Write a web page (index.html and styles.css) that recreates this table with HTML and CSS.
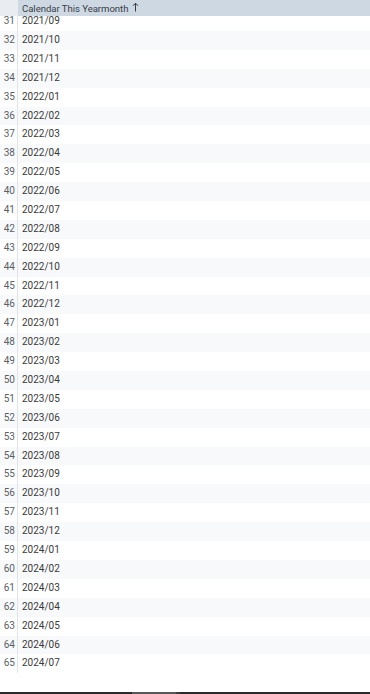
FILE: index.html
```html
<!DOCTYPE html>
<html>
<head>
<meta charset="utf-8">
<link rel="stylesheet" href="styles.css">
</head>
<body>
<div class="table">
  <div class="head">
    <div class="idx-head"></div>
    <div class="col-head">Calendar This Yearmonth <svg class="arrow" width="7" height="10" viewBox="0 0 7 10"><path d="M3.5 1.2V9.5M1 3.8L3.5 1.2L6 3.8" fill="none" stroke="#333a42" stroke-width="1"/></svg></div>
  </div>
  <div class="rows" id="rows">
    <div class="row"><div class="idx">31</div><div class="cell">2021/09</div></div>
    <div class="row"><div class="idx">32</div><div class="cell">2021/10</div></div>
    <div class="row"><div class="idx">33</div><div class="cell">2021/11</div></div>
    <div class="row"><div class="idx">34</div><div class="cell">2021/12</div></div>
    <div class="row"><div class="idx">35</div><div class="cell">2022/01</div></div>
    <div class="row"><div class="idx">36</div><div class="cell">2022/02</div></div>
    <div class="row"><div class="idx">37</div><div class="cell">2022/03</div></div>
    <div class="row"><div class="idx">38</div><div class="cell">2022/04</div></div>
    <div class="row"><div class="idx">39</div><div class="cell">2022/05</div></div>
    <div class="row"><div class="idx">40</div><div class="cell">2022/06</div></div>
    <div class="row"><div class="idx">41</div><div class="cell">2022/07</div></div>
    <div class="row"><div class="idx">42</div><div class="cell">2022/08</div></div>
    <div class="row"><div class="idx">43</div><div class="cell">2022/09</div></div>
    <div class="row"><div class="idx">44</div><div class="cell">2022/10</div></div>
    <div class="row"><div class="idx">45</div><div class="cell">2022/11</div></div>
    <div class="row"><div class="idx">46</div><div class="cell">2022/12</div></div>
    <div class="row"><div class="idx">47</div><div class="cell">2023/01</div></div>
    <div class="row"><div class="idx">48</div><div class="cell">2023/02</div></div>
    <div class="row"><div class="idx">49</div><div class="cell">2023/03</div></div>
    <div class="row"><div class="idx">50</div><div class="cell">2023/04</div></div>
    <div class="row"><div class="idx">51</div><div class="cell">2023/05</div></div>
    <div class="row"><div class="idx">52</div><div class="cell">2023/06</div></div>
    <div class="row"><div class="idx">53</div><div class="cell">2023/07</div></div>
    <div class="row"><div class="idx">54</div><div class="cell">2023/08</div></div>
    <div class="row"><div class="idx">55</div><div class="cell">2023/09</div></div>
    <div class="row"><div class="idx">56</div><div class="cell">2023/10</div></div>
    <div class="row"><div class="idx">57</div><div class="cell">2023/11</div></div>
    <div class="row"><div class="idx">58</div><div class="cell">2023/12</div></div>
    <div class="row"><div class="idx">59</div><div class="cell">2024/01</div></div>
    <div class="row"><div class="idx">60</div><div class="cell">2024/02</div></div>
    <div class="row"><div class="idx">61</div><div class="cell">2024/03</div></div>
    <div class="row"><div class="idx">62</div><div class="cell">2024/04</div></div>
    <div class="row"><div class="idx">63</div><div class="cell">2024/05</div></div>
    <div class="row"><div class="idx">64</div><div class="cell">2024/06</div></div>
    <div class="row"><div class="idx">65</div><div class="cell">2024/07</div></div>
  </div>
  <div class="filler"></div>
  <div class="scrollbar"><div class="sb-left"></div><div class="sb-thumb"></div><div class="sb-mid"></div><div class="sb-right"></div></div>
</div>
</body>
</html>
```
FILE: styles.css
```css
html, body {
  margin: 0;
  padding: 0;
  background: #ffffff;
}
body {
  width: 370px;
  height: 694px;
  overflow: hidden;
  font-family: Roboto, "Liberation Sans", sans-serif;
  font-size: 10px;
}
.table {
  display: flex;
  flex-direction: column;
  height: 694px;
}
.head {
  display: flex;
  height: 16px;
  flex: none;
  position: relative;
  z-index: 1;
}
.idx-head {
  width: 18px;
  background: #e9edf1;
}
.col-head {
  flex: 1;
  background: #cdd8e3;
  color: #3a4048;
  padding-left: 4px;
  display: flex;
  align-items: center;
  gap: 4px;
  white-space: nowrap;
  font-size: 9.6px;
  letter-spacing: -0.05px;
}
.arrow {
  display: block;
  margin-top: -2px;
}
.rows {
  margin-top: -3.9px;
  flex: none;
}
.row {
  display: flex;
  height: 18.9px;
  line-height: 18.9px;
}
.row:nth-child(even) {
  background: #f8f9fb;
}
.idx {
  width: 18px;
  border-right: 1px solid #e1e4e8;
  text-align: right;
  padding-right: 2px;
  box-sizing: border-box;
  color: #5a5f66;
}
.cell {
  padding-left: 4px;
  color: #3a3a3a;
}
.filler {
  flex: 1;
}
.scrollbar {
  flex: none;
  height: 2px;
  display: flex;
}
.sb-left {
  width: 132px;
  background: #2b2b2b;
}
.sb-thumb {
  width: 44px;
  background: #575757;
}
.sb-mid {
  width: 4px;
  background: #3c3c3c;
}
.sb-right {
  flex: 1;
  background: #2b2b2b;
}
```
